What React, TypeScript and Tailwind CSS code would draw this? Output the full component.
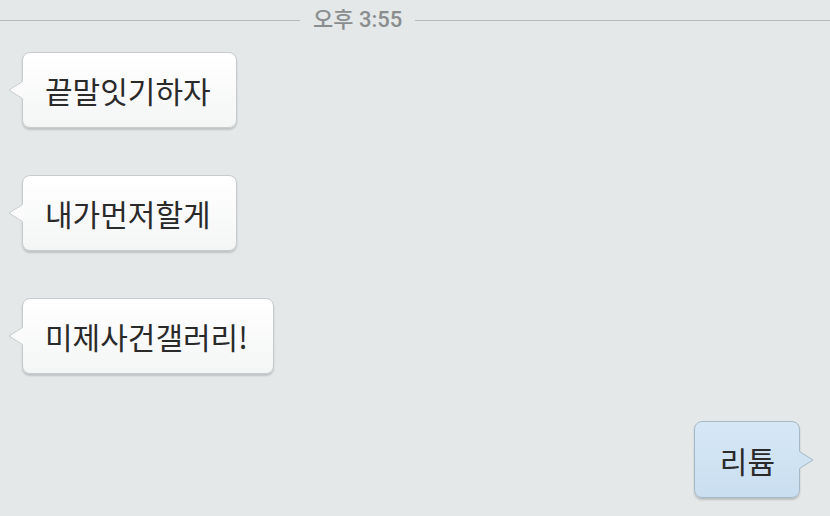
import React from 'react';

const KR = '"Noto Sans CJK KR", "Noto Sans", sans-serif';

type BubbleProps = { text: string; mine?: boolean };

const Bubble: React.FC<BubbleProps> = ({ text, mine }) => {
  const fill = mine ? '#cfe3f3' : '#fbfbfb';
  const edge = mine ? '#a6b8c6' : '#c7cbcd';
  return (
    <div className={mine ? 'relative self-end mr-[30px]' : 'relative self-start ml-[22px]'}>
      <div
        className={
          mine
            ? 'h-[77px] flex items-center pl-[25px] pr-[24px] rounded-[8px] border border-[#a6b8c6] bg-gradient-to-b from-[#d6e8f6] to-[#c9def0] shadow-[0_2px_2px_rgba(0,0,0,0.18)]'
            : 'h-[76px] flex items-center pl-[22px] pr-[25px] rounded-[8px] border border-[#c7cbcd] bg-gradient-to-b from-[#ffffff] to-[#f4f5f5] shadow-[0_2px_2px_rgba(0,0,0,0.16)]'
        }
      >
        <span className="text-[30px] leading-none text-[#2a2a2a]" style={{ fontFamily: KR }}>
          {text}
        </span>
      </div>
      {mine ? (
        <svg className="absolute right-[-14px] top-[30px]" width="15" height="18" viewBox="0 0 15 18">
          <polygon points="0,0 14,9 0,18" fill={fill} />
          <polyline points="0.5,0.5 14,9 0.5,17.5" fill="none" stroke={edge} strokeWidth="1" />
        </svg>
      ) : (
        <svg className="absolute left-[-14px] top-[29px]" width="15" height="18" viewBox="0 0 15 18">
          <polygon points="15,0 1,9 15,18" fill={fill} />
          <polyline points="14.5,0.5 1,9 14.5,17.5" fill="none" stroke={edge} strokeWidth="1" />
        </svg>
      )}
    </div>
  );
};

const App: React.FC = () => {
  return (
    <div className="w-full h-[516px] bg-[#e4e8e9] overflow-hidden">
      <div className="h-[40px] flex items-center">
        <div className="w-[300px] h-px bg-[#b4b8b9]"></div>
        <span
          className="px-[13px] text-[22px] leading-none font-medium text-[#8a8d8e]"
          style={{ fontFamily: 'Roboto, "Noto Sans CJK KR", sans-serif' }}
        >
          오후 3:55
        </span>
        <div className="flex-1 h-px bg-[#b4b8b9]"></div>
      </div>
      <div className="flex flex-col gap-[47px] pt-[12px]">
        {['끝말잇기하자', '내가먼저할게', '미제사건갤러리!'].map(t => (
          <Bubble key={t} text={t} />
        ))}
        <Bubble text="리튬" mine />
      </div>
    </div>
  );
};

export default App;
